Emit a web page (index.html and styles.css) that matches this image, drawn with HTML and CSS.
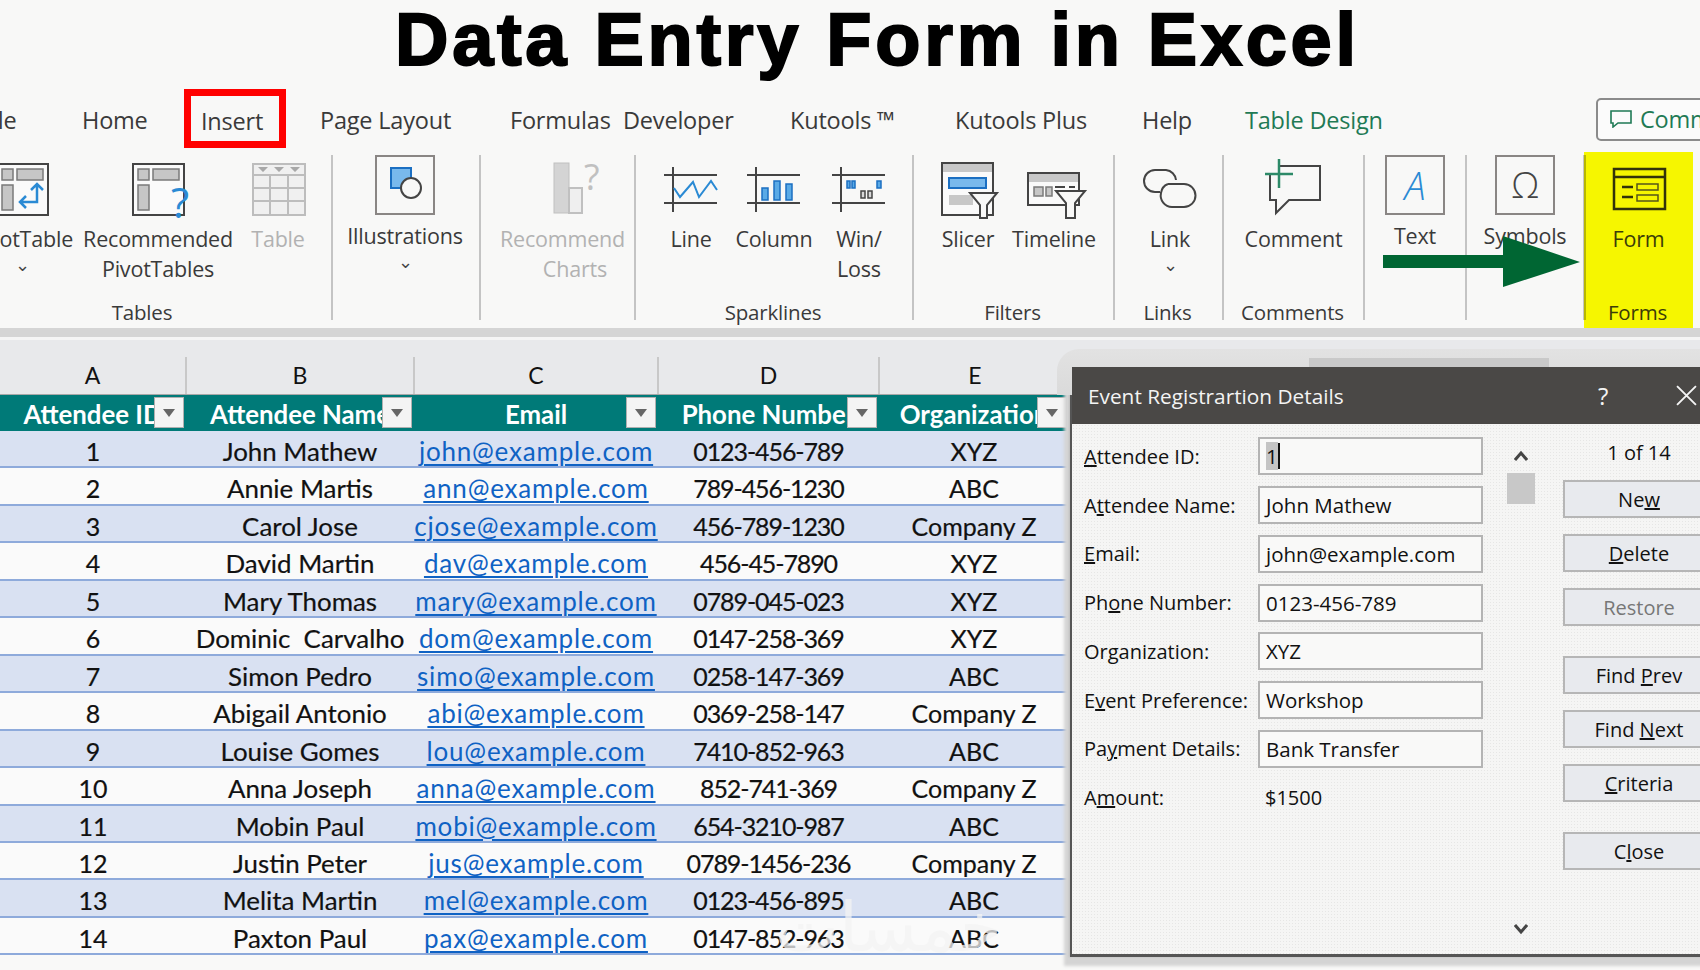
FILE: index.html
```html
<!DOCTYPE html>
<html lang="en">
<head>
<meta charset="utf-8">
<title>Data Entry Form in Excel</title>
<link rel="stylesheet" href="styles.css">
</head>
<body>
<div class="page">
  <h1 class="title">Data Entry Form in Excel</h1>

  <nav class="tabs">
    <span class="tab">File</span>
    <span class="tab">Home</span>
    <span class="tab"><span class="tab-active">Insert</span></span>
    <span class="tab">Page Layout</span>
    <span class="tab">Formulas</span>
    <span class="tab">Developer</span>
    <span class="tab">Kutools ™</span>
    <span class="tab">Kutools Plus</span>
    <span class="tab">Help</span>
    <span class="tab tab-green">Table Design</span>
    <span class="comm">
      <svg class="comm-icon" viewBox="0 0 22 18"><path d="M1 1H21V13H8L3 17V13H1Z"/></svg>
      <span>Comments</span>
    </span>
  </nav>

  <section class="ribbon">
    <div class="group g-tables">
      <div class="items">
        <div class="item w-pivot">
          <svg class="ico" viewBox="0 0 58 58"><rect class="frame" x="4" y="6" width="51" height="51"/><rect class="blk" x="9" y="11" width="11" height="11"/><rect class="blk" x="24" y="11" width="26" height="11"/><rect class="blk" x="9" y="27" width="11" height="25"/><path class="blue" d="M44 26V44H27M38 32L44 26L50 32M33 38L27 44L33 50"/></svg>
          <span>PivotTable</span><span class="chev">⌄</span>
        </div>
        <div class="item w-pivot">
          <svg class="ico" viewBox="0 0 58 58"><rect class="frame" x="4" y="6" width="51" height="51"/><rect class="blk" x="9" y="11" width="11" height="11"/><rect class="blk" x="24" y="11" width="26" height="11"/><rect class="blk" x="9" y="27" width="11" height="25"/><text class="qmark" x="42" y="60">?</text></svg>
          <span>Recommended</span><span>PivotTables</span>
        </div>
        <div class="item w-table dim">
          <svg class="ico" viewBox="0 0 58 58"><path class="gridline" d="M4 6H56V57H4ZM4 17H56M4 30H56M4 43H56M21 17V57M39 17V57"/><path class="tri" d="M9 9H19L14 14ZM25 9H35L30 14ZM41 9H51L46 14Z"/></svg>
          <span>Table</span>
        </div>
      </div>
      <div class="glabel">Tables</div>
    </div>

    <div class="group g-illus">
      <div class="items">
        <div class="item item-box">
          <svg class="box-ico" viewBox="0 0 60 60"><rect class="box" x="1" y="1" width="58" height="58"/><rect class="sq" x="16" y="13" width="20" height="20"/><circle class="circ" cx="36" cy="33" r="10"/></svg>
          <span>Illustrations</span><span class="chev">⌄</span>
        </div>
      </div>
    </div>

    <div class="group g-charts">
      <div class="items">
        <div class="item item-clip dim">
          <svg class="ico" viewBox="0 0 58 58"><rect class="bar1" x="8" y="5" width="15" height="50"/><rect class="bar2" x="23" y="30" width="13" height="25"/><text class="qmark-gray" x="38" y="32">?</text></svg>
          <span>Recommended</span><span>Charts</span>
        </div>
      </div>
    </div>

    <div class="group g-spark">
      <div class="items">
        <div class="item w-line">
          <svg class="ico" viewBox="0 0 58 58"><path class="axis" d="M11 9V54M2 17H55M2 45H55"/><path class="blue-thin" d="M12 30L18 39L31 24L37 39L49 23L55 32"/></svg>
          <span>Line</span>
        </div>
        <div class="item w-col">
          <svg class="ico" viewBox="0 0 58 58"><path class="axis" d="M11 9V54M2 17H55M2 45H55"/><rect class="colbar" x="17" y="30" width="6" height="12"/><rect class="colbar" x="29" y="23" width="6" height="19"/><rect class="colbar" x="41" y="26" width="6" height="16"/></svg>
          <span>Column</span>
        </div>
        <div class="item w-win">
          <svg class="ico" viewBox="0 0 58 58"><path class="axis" d="M11 9V54M2 17H55M2 45H55"/><rect class="colbar" x="17" y="23" width="3" height="7"/><rect class="colbar" x="22" y="23" width="3" height="7"/><rect class="darkbar" x="31" y="33" width="4" height="7"/><rect class="darkbar" x="38" y="33" width="4" height="7"/><rect class="colbar" x="47" y="23" width="4" height="7"/></svg>
          <span>Win/</span><span>Loss</span>
        </div>
      </div>
      <div class="glabel">Sparklines</div>
    </div>

    <div class="group g-filters">
      <div class="items">
        <div class="item w-slicer">
          <svg class="ico" viewBox="0 0 58 58"><rect class="frame" x="3" y="5" width="51" height="52"/><rect class="blk-flat" x="4" y="6" width="49" height="8"/><rect class="colbar-wide" x="10" y="20" width="37" height="10"/><rect class="blk-flat" x="10" y="37" width="24" height="10"/><path class="funnel" d="M31 35H58L48 47V60H41V47Z"/></svg>
          <span>Slicer</span>
        </div>
        <div class="item w-timeline">
          <svg class="ico" viewBox="0 0 58 58"><rect class="frame" x="3" y="15" width="51" height="32"/><rect class="blk-flat" x="4" y="16" width="49" height="8"/><rect class="blk" x="9" y="29" width="9" height="9"/><rect class="blk" x="21" y="29" width="6" height="9"/><path class="axis" d="M30 29H40M44 29H50"/><path class="funnel" d="M31 33H60L50 45V60H41V45Z"/></svg>
          <span>Timeline</span>
        </div>
      </div>
      <div class="glabel">Filters</div>
    </div>

    <div class="group g-links">
      <div class="items">
        <div class="item w-fill">
          <svg class="ico" viewBox="0 0 58 58"><path class="axis" d="M19 34H14A11 11 0 0 1 14 12H25A11 11 0 0 1 35 22M27 26H43A11.5 11.5 0 0 1 43 49H31A11.5 11.5 0 0 1 20 35A11 11 0 0 1 27 26"/></svg>
          <span>Link</span><span class="chev">⌄</span>
        </div>
      </div>
      <div class="glabel">Links</div>
    </div>

    <div class="group g-comments">
      <div class="items">
        <div class="item w-fill">
          <svg class="ico" viewBox="0 0 58 58"><path class="axis" d="M5 16V42H11V55L24 42H55V8H14"/><path class="plus" d="M0 16H28M14 1V30"/></svg>
          <span>Comment</span>
        </div>
      </div>
      <div class="glabel">Comments</div>
    </div>

    <div class="group g-text">
      <div class="items">
        <div class="item item-box w-fill">
          <span class="glyph-box glyph-a">A</span>
          <span>Text</span>
        </div>
      </div>
    </div>

    <div class="group g-symbols">
      <div class="items">
        <div class="item item-box w-fill">
          <span class="glyph-box glyph-o">Ω</span>
          <span>Symbols</span>
        </div>
      </div>
    </div>

    <div class="group g-forms">
      <div class="items">
        <div class="item w-fill">
          <svg class="ico" viewBox="0 0 58 58"><path class="form" d="M4 11H55V51H4ZM4 19H55M12 29H23M12 39H23"/><path class="form-thin" d="M27 26H48V32H27ZM27 37H48V43H27Z"/></svg>
          <span>Form</span>
        </div>
      </div>
      <div class="glabel">Forms</div>
    </div>
  </section>

  <div class="divider"></div>

  <main class="sheet">
    <div class="row letters">
      <div>A</div><div>B</div><div>C</div><div>D</div><div>E</div>
    </div>
    <div class="row head">
      <div class="hcell"><span>Attendee ID</span><i class="filter"></i></div>
      <div class="hcell"><span>Attendee Name</span><i class="filter"></i></div>
      <div class="hcell"><span>Email</span><i class="filter"></i></div>
      <div class="hcell"><span>Phone Number</span><i class="filter"></i></div>
      <div class="hcell"><span>Organization</span><i class="filter"></i></div>
    </div>
    <div class="row data"><div>1</div><div class="name">John Mathew</div><div><a>john@example.com</a></div><div class="phone">0123-456-789</div><div>XYZ</div></div>
    <div class="row data"><div>2</div><div class="name">Annie Martis</div><div><a>ann@example.com</a></div><div class="phone">789-456-1230</div><div>ABC</div></div>
    <div class="row data"><div>3</div><div class="name">Carol Jose</div><div><a>cjose@example.com</a></div><div class="phone">456-789-1230</div><div>Company Z</div></div>
    <div class="row data"><div>4</div><div class="name">David Martin</div><div><a>dav@example.com</a></div><div class="phone">456-45-7890</div><div>XYZ</div></div>
    <div class="row data"><div>5</div><div class="name">Mary Thomas</div><div><a>mary@example.com</a></div><div class="phone">0789-045-023</div><div>XYZ</div></div>
    <div class="row data"><div>6</div><div class="name">Dominic&nbsp; Carvalho</div><div><a>dom@example.com</a></div><div class="phone">0147-258-369</div><div>XYZ</div></div>
    <div class="row data"><div>7</div><div class="name">Simon Pedro</div><div><a>simo@example.com</a></div><div class="phone">0258-147-369</div><div>ABC</div></div>
    <div class="row data"><div>8</div><div class="name">Abigail Antonio</div><div><a>abi@example.com</a></div><div class="phone">0369-258-147</div><div>Company Z</div></div>
    <div class="row data"><div>9</div><div class="name">Louise Gomes</div><div><a>lou@example.com</a></div><div class="phone">7410-852-963</div><div>ABC</div></div>
    <div class="row data"><div>10</div><div class="name">Anna Joseph</div><div><a>anna@example.com</a></div><div class="phone">852-741-369</div><div>Company Z</div></div>
    <div class="row data"><div>11</div><div class="name">Mobin Paul</div><div><a>mobi@example.com</a></div><div class="phone">654-3210-987</div><div>ABC</div></div>
    <div class="row data"><div>12</div><div class="name">Justin Peter</div><div><a>jus@example.com</a></div><div class="phone">0789-1456-236</div><div>Company Z</div></div>
    <div class="row data"><div>13</div><div class="name">Melita Martin</div><div><a>mel@example.com</a></div><div class="phone">0123-456-895</div><div>ABC</div></div>
    <div class="row data"><div>14</div><div class="name">Paxton Paul</div><div><a>pax@example.com</a></div><div class="phone">0147-852-963</div><div>ABC</div></div>
  </main>

  <div class="watermark">خمسات</div>

  <svg class="arrow" viewBox="0 0 197 51"><polygon points="0,19 120,19 120,0 197,26 120,51 120,32 0,32"/></svg>

  <aside class="dialog">
    <i class="dialog-tab"></i>
    <header class="dialog-bar">
      <span class="dialog-title">Event Registrartion Details</span>
      <span class="dialog-help">?</span>
      <svg class="dialog-x" viewBox="0 0 20 20"><path d="M1 1L19 19M19 1L1 19"/></svg>
    </header>
    <div class="dialog-body">
      <div class="fields">
        <div class="field"><label><u>A</u>ttendee ID:</label><div class="input"><span class="sel">1</span><i class="caret"></i></div></div>
        <div class="field"><label>A<u>t</u>tendee Name:</label><div class="input">John Mathew</div></div>
        <div class="field"><label><u>E</u>mail:</label><div class="input">john@example.com</div></div>
        <div class="field"><label>Ph<u>o</u>ne Number:</label><div class="input">0123-456-789</div></div>
        <div class="field"><label>Or<u>g</u>anization:</label><div class="input">XYZ</div></div>
        <div class="field"><label>E<u>v</u>ent Preference:</label><div class="input">Workshop</div></div>
        <div class="field"><label>Pa<u>y</u>ment Details:</label><div class="input">Bank Transfer</div></div>
        <div class="field"><label>A<u>m</u>ount:</label><div class="static">$1500</div></div>
      </div>
      <div class="scroll">
        <svg class="scroll-arrow" viewBox="0 0 14 12"><path d="M1 10L7 3L13 10"/></svg>
        <i class="thumb"></i>
        <svg class="scroll-arrow scroll-down" viewBox="0 0 14 12"><path d="M1 2L7 9L13 2"/></svg>
      </div>
      <div class="actions">
        <div class="counter">1 of 14</div>
        <div class="btns">
          <div class="btn">Ne<u>w</u></div>
          <div class="btn"><u>D</u>elete</div>
          <div class="btn btn-off">Restore</div>
        </div>
        <div class="btns btns-gap">
          <div class="btn">Find <u>P</u>rev</div>
          <div class="btn">Find <u>N</u>ext</div>
          <div class="btn"><u>C</u>riteria</div>
        </div>
        <div class="btns btns-gap">
          <div class="btn">C<u>l</u>ose</div>
        </div>
      </div>
    </div>
  </aside>
</div>
</body>
</html>
```
FILE: styles.css
```css
* { box-sizing: border-box; }
html, body { margin: 0; padding: 0; background: #f8f8f7; }
.page {
  position: relative;
  width: 1700px;
  height: 970px;
  overflow: hidden;
  background: #f8f8f7;
  font-family: "Open Sans", "Noto Sans", sans-serif;
  color: #3a3a3a;
}

/* Title */
.title {
  margin: 0;
  height: 90px;
  padding-left: 395px;
  font: bold 74px/80px "Liberation Sans", Arial, sans-serif;
  letter-spacing: 3.7px;
  color: #000;
  -webkit-text-stroke: 2px #000;
  white-space: nowrap;
}

/* Tabs */
.tabs {
  display: grid;
  grid-template-columns: 102px 118px 120px 190px 113px 167px 165px 187px 103px 351px 200px;
  grid-template-rows: 60px;
  align-items: center;
  height: 60px;
  margin-bottom: 2px;
  margin-left: -20px;
  font-size: 23.5px;
  letter-spacing: -0.2px;
  white-space: nowrap;
}
.tab-active {
  display: inline-flex;
  align-items: center;
  height: 59px;
  margin-left: -16px;
  margin-bottom: 4px;
  padding: 5px 16px 0 10px;
  border: 7px solid #f00;
  vertical-align: top;
}
.tab-green { color: #1f7a55; }
.comm {
  display: flex;
  align-items: center;
  gap: 8px;
  height: 43px;
  padding-left: 12px;
  border: 2px solid #8b8b8b;
  border-radius: 5px;
  background: #fbfbfb;
  color: #1f7a55;
  margin-top: -2px;
}
.comm-icon { width: 22px; height: 18px; fill: none; stroke: #1f7a55; stroke-width: 1.6; }

/* Ribbon */
.ribbon {
  display: flex;
  height: 176px;
  font-size: 21.5px;
  letter-spacing: -0.2px;
  white-space: nowrap;
}
.group {
  position: relative;
  display: flex;
  flex-direction: column;
  flex: none;
}
.group::after {
  content: "";
  position: absolute;
  top: 3px;
  bottom: 8px;
  right: -1px;
  width: 2px;
  background: #c4c4c4;
}
.g-tables { width: 378px; margin-left: -46px; }
.g-illus { width: 148px; }
.g-charts { width: 155px; }
.g-spark { width: 278px; }
.g-filters { width: 201px; }
.g-links { width: 109px; }
.g-comments { width: 141px; }
.g-text { width: 102px; }
.g-symbols { width: 118px; }
.g-forms { width: 109px; background: #f6f600; color: #3c3c08; }
.g-forms::before {
  content: "";
  position: absolute;
  top: 3px;
  bottom: 8px;
  left: 0;
  width: 2px;
  background: #b8b800;
}
.g-forms::after { display: none; }

.items { display: flex; flex: 1; min-height: 0; }
.item {
  display: flex;
  flex-direction: column;
  align-items: center;
  padding-top: 6px;
  line-height: 29.5px;
}
.item-box { padding-top: 3px; }
.w-pivot { width: 136px; }
.w-table { width: 104px; }
.w-line { width: 86px; }
.w-col { width: 80px; }
.w-win { width: 90px; }
.w-slicer { width: 80px; }
.w-timeline { width: 92px; }
.w-fill { flex: 1; }
.g-spark .items { padding-left: 13px; }
.g-filters .items { padding-left: 15px; }
.g-links .items { padding-left: 3px; }
.item-clip {
  width: 150px;
  margin-left: 20px;
  clip-path: inset(0 25px 0 0);
}
.g-illus .item { width: 146px; }
.dim { color: #b2b2b2; }
.chev { font-size: 18px; line-height: 21px; color: #444; }

.ico { display: block; width: 58px; height: 58px; margin-bottom: 8px; overflow: visible; flex: none; }
.box-ico { display: block; width: 60px; height: 60px; margin-bottom: 6px; flex: none; }
.glyph-box {
  display: flex;
  align-items: center;
  justify-content: center;
  width: 60px;
  height: 60px;
  margin-bottom: 6px;
  border: 2px solid #8a8684;
  flex: none;
}
.glyph-a { font: italic 300 38px/1 "Open Sans", sans-serif; color: #2a8ad4; }
.glyph-o { font: 300 36px/1 "Open Sans", sans-serif; color: #444; }

.frame { fill: #fafafa; stroke: #444; stroke-width: 2; }
.blk { fill: #c6c6c6; stroke: #7a7a7a; stroke-width: 1.5; }
.blk-flat { fill: #c8c8c8; }
.blue { fill: none; stroke: #2a8ad4; stroke-width: 2.5; }
.blue-thin { fill: none; stroke: #2a8ad4; stroke-width: 2; }
.qmark { font-family: "Open Sans", sans-serif; font-size: 42px; fill: #2a8ad4; }
.qmark-gray { font-family: "Open Sans", sans-serif; font-size: 36px; fill: #c0c0c0; }
.gridline { fill: #f0f0f0; stroke: #bdbdbd; stroke-width: 2; }
.tri { fill: #a8a8a8; }
.box { fill: none; stroke: #8a8684; stroke-width: 2; }
.sq { fill: #79b9ec; stroke: #1b6fc2; stroke-width: 2; }
.circ { fill: #f8f8f7; stroke: #444; stroke-width: 2; }
.bar1 { fill: #d4d4d4; stroke: #c0c0c0; }
.bar2 { fill: #efefef; stroke: #c0c0c0; stroke-width: 2; }
.axis { fill: none; stroke: #444; stroke-width: 2; }
.colbar { fill: #5aaae6; stroke: #1b6fc2; stroke-width: 1.5; }
.colbar-wide { fill: #79b9ec; stroke: #1b6fc2; stroke-width: 2; }
.darkbar { fill: #d8d8d8; stroke: #444; stroke-width: 1.5; }
.funnel { fill: #f8f8f7; stroke: #444; stroke-width: 2; }
.plus { fill: none; stroke: #2d8a68; stroke-width: 2.5; }
.form { fill: none; stroke: #33330a; stroke-width: 2.5; }
.form-thin { fill: none; stroke: #55551a; stroke-width: 1.5; }

.glabel {
  height: 31px;
  line-height: 31px;
  text-align: center;
  font-size: 20.5px;
  flex: none;
  padding-right: 2px;
}

/* Divider */
.divider {
  height: 12px;
  background: linear-gradient(#d5d5d5 0 9px, #f5f5f5 9px 12px);
}

/* Sheet */
.sheet { height: 630px; background: linear-gradient(#e8e9eb 0 55px, #f9f9f8 55px); }
.row {
  display: grid;
  grid-template-columns: 186px 228px 244px 221px 192px;
  width: 1071px;
  text-align: center;
  font-family: Lato, "Open Sans", sans-serif;
  color: #111;
}
.letters {
  grid-template-columns: 187px 228px 244px 221px 190px;
  width: 1070px;
  height: 55px;
  align-items: end;
  font-size: 23px;
  line-height: 37px;
  border-bottom: 1px solid #a8a8a8;
}
.letters > div { height: 37px; border-right: 2px solid #c8c8c8; }
.letters > div:last-child { border-right: 0; }
.head {
  height: 36px;
  background: #007a78;
  color: #fff;
  font-weight: 700;
  font-size: 25.8px;
  line-height: 38px;
}
.hcell {
  position: relative;
  display: flex;
  justify-content: center;
  overflow: hidden;
  white-space: nowrap;
}
.hcell:last-child { padding-right: 2px; }
.filter {
  position: absolute;
  top: 2px;
  right: 2px;
  width: 30px;
  height: 31px;
  background: #f4f4f4;
  border: 1px solid #b0b0b0;
}
.hcell:last-child .filter { right: 4px; }
.filter::after {
  content: "";
  position: absolute;
  left: 8px;
  top: 11px;
  border-left: 6px solid transparent;
  border-right: 6px solid transparent;
  border-top: 8px solid #666;
}
.data {
  height: 37.46px;
  font-size: 25px;
  line-height: 37px;
  border-bottom: 2px solid #8eaadb;
  padding-top: 2px;
  white-space: nowrap;
  -webkit-text-stroke: 0.2px #111;
}
.data > div:last-child { padding-right: 2px; }
.data:nth-child(odd) { background: #d9e1f2; }
.data:nth-child(even) { background: #fafafa; }
.name { font-size: 25.9px; }
.phone { letter-spacing: -1.1px; }
.data a {
  font-size: 26px;
  letter-spacing: 0.8px;
  color: #0f62c4;
  -webkit-text-stroke: 0;
  text-decoration: underline;
  text-decoration-thickness: 2px;
  text-underline-offset: 3px;
}

/* Watermark */
.watermark {
  position: absolute;
  left: 775px;
  top: 888px;
  font: 68px/80px "DejaVu Sans", sans-serif;
  color: #f4f4f4;
  opacity: 0.75;
}

/* Arrow */
.arrow {
  position: absolute;
  left: 1383px;
  top: 236px;
  width: 197px;
  height: 51px;
  fill: #006633;
}

/* Dialog */
.dialog {
  position: absolute;
  left: 1070px;
  top: 367px;
  width: 700px;
  height: 590px;
  display: flex;
  flex-direction: column;
  background-color: #f5f5f4;
  background-image: radial-gradient(#e6e6e5 0.7px, transparent 0.9px);
  background-size: 3px 3px;
  border-left: 2px solid #555;
  border-bottom: 3px solid #555;
  box-shadow: -1px 0 2px #bdbdbd, -6px 9px 3px #d4d4d4;
  font-family: "Open Sans", sans-serif;
  font-size: 20px;
  color: #111;
  white-space: nowrap;
}
.dialog::before {
  content: "";
  position: absolute;
  left: -15px;
  top: -18px;
  width: 100%;
  height: 46px;
  border-top-left-radius: 22px;
  background: linear-gradient(#e2e2e2, #dadada);
}
.dialog-tab {
  position: absolute;
  left: 237px;
  top: -9px;
  width: 240px;
  height: 9px;
  background: #c9c9c9;
}
.dialog-bar {
  position: relative;
  display: flex;
  align-items: center;
  height: 57px;
  padding-left: 16px;
  background: #4a4846;
  color: #f4f4f4;
  flex: none;
  font-size: 20.8px;
}
.dialog-title { width: 510px; }
.dialog-help { width: 78px; font-size: 24px; }
.dialog-x { width: 21px; height: 21px; fill: none; stroke: #f4f4f4; stroke-width: 1.8; }
.dialog-body {
  display: flex;
  flex: 1;
  min-height: 0;
  padding-left: 12px;
}
.fields { width: 399px; padding-top: 8px; flex: none; }
.field {
  display: flex;
  align-items: center;
  height: 48.75px;
}
.field label { width: 174px; flex: none; }
.input {
  display: flex;
  align-items: center;
  width: 225px;
  height: 38px;
  padding-left: 6px;
  font-size: 20.5px;
  background: #f9f9f8;
  border: 2px solid #b4b4b4;
}
.static { padding-left: 7px; }
.sel { background: #c4c4c4; }
.caret { width: 2px; height: 26px; background: #111; }
.scroll {
  display: flex;
  flex-direction: column;
  align-items: center;
  width: 28px;
  margin-left: 24px;
  padding: 26px 0 19px;
  flex: none;
}
.scroll-arrow { width: 14px; height: 12px; fill: none; stroke: #444; stroke-width: 3; flex: none; }
.scroll-down { margin-top: auto; }
.thumb { width: 28px; height: 31px; margin-top: 11px; background: #c8c8c8; flex: none; }
.actions { width: 152px; margin-left: 28px; flex: none; }
.counter { height: 40px; margin-top: 9px; margin-bottom: 7px; line-height: 40px; text-align: center; }
.btns { display: flex; flex-direction: column; gap: 16px; }
.btns-gap { margin-top: 30px; }
.btn {
  height: 38px;
  line-height: 36px;
  text-align: center;
  background: #e8eaee;
  border: 2px solid #b6b6b6;
}
.btn-off { color: #777; }
```
